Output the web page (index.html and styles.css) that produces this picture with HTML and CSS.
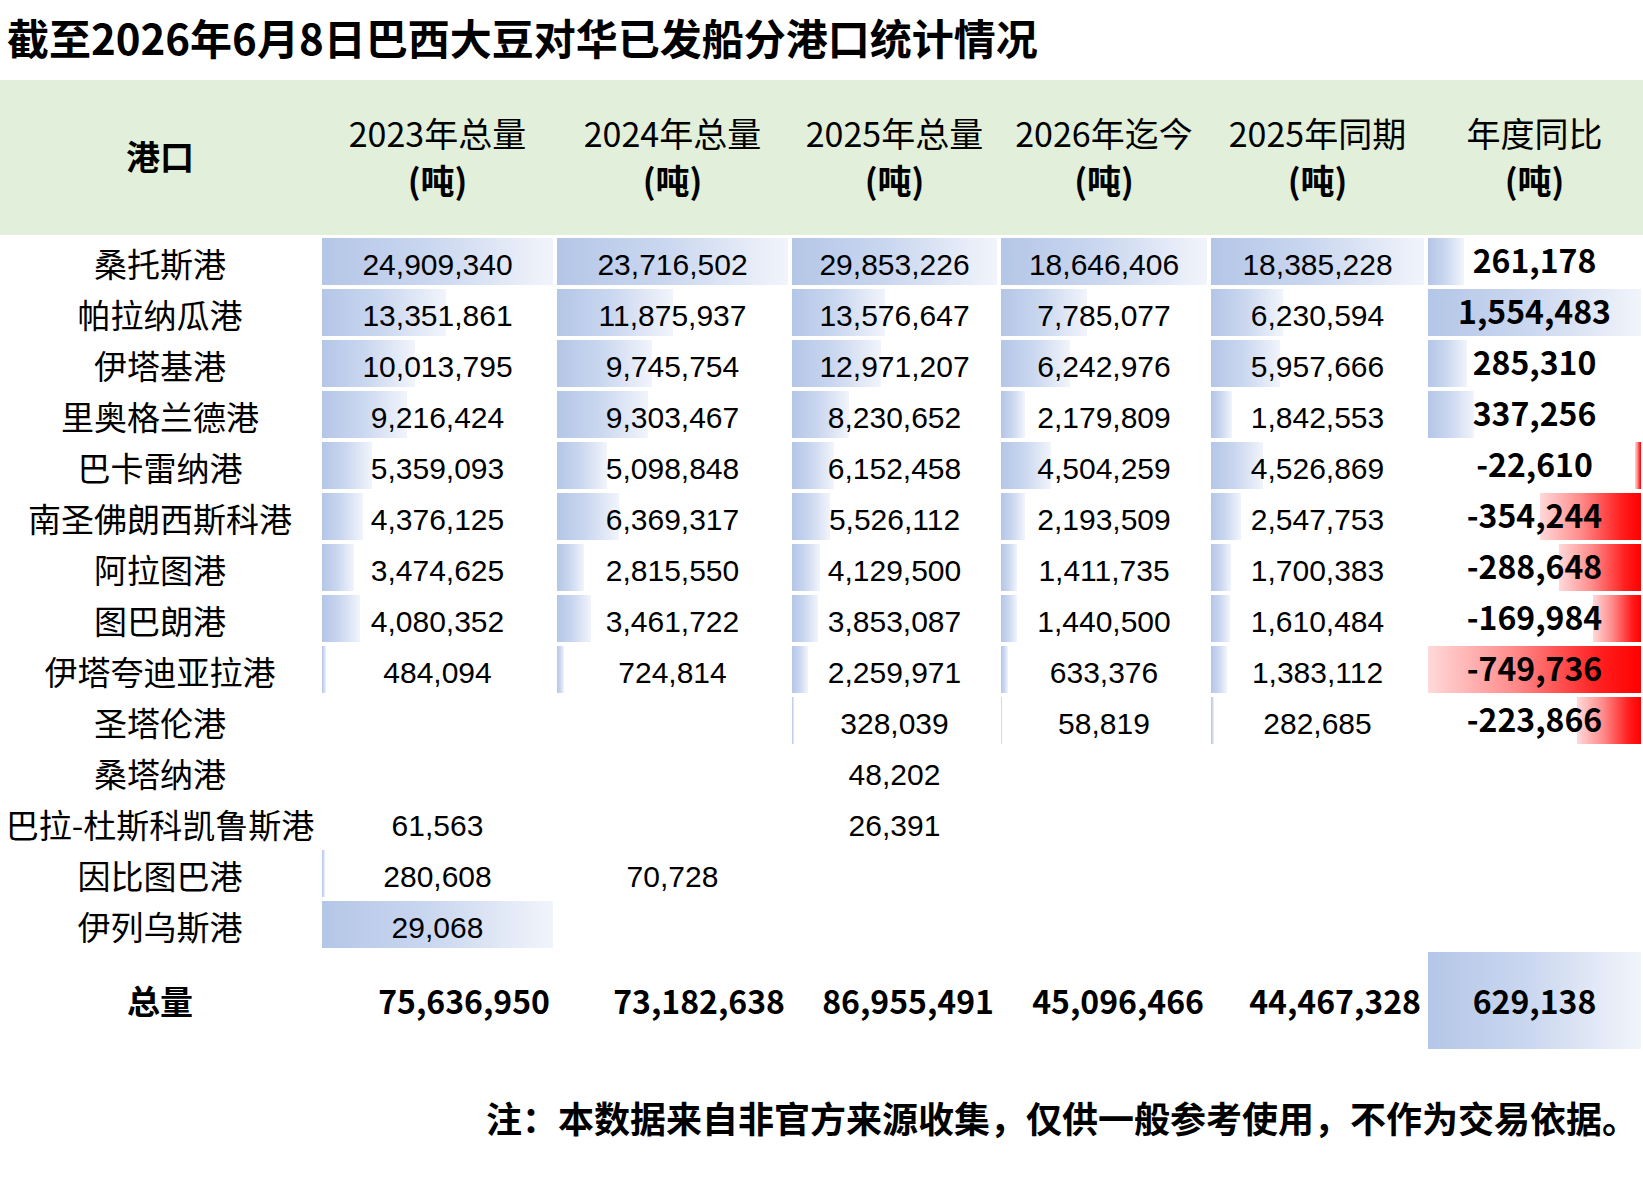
FILE: index.html
```html
<!DOCTYPE html>
<html lang="zh-CN">
<head>
<meta charset="utf-8">
<title>截至2026年6月8日巴西大豆对华已发船分港口统计情况</title>
<link rel="stylesheet" href="styles.css">
</head>
<body>
<div class="page">
  <h1 class="title">截至2026年6月8日巴西大豆对华已发船分港口统计情况</h1>

  <div class="head">
    <div class="hc"><span class="port-h">港口</span></div>
    <div class="hc"><span>2023年总量</span><b>(吨)</b></div>
    <div class="hc"><span>2024年总量</span><b>(吨)</b></div>
    <div class="hc"><span>2025年总量</span><b>(吨)</b></div>
    <div class="hc"><span>2026年迄今</span><b>(吨)</b></div>
    <div class="hc"><span>2025年同期</span><b>(吨)</b></div>
    <div class="hc"><span>年度同比</span><b>(吨)</b></div>
  </div>

  <div class="rows">
    <!-- 1 -->
    <div class="c port"><span>桑托斯港</span></div>
    <div class="c"><i class="bar" style="width:100%"></i><span class="v">24,909,340</span></div>
    <div class="c"><i class="bar" style="width:100%"></i><span class="v">23,716,502</span></div>
    <div class="c"><i class="bar" style="width:100%"></i><span class="v">29,853,226</span></div>
    <div class="c"><i class="bar" style="width:100%"></i><span class="v">18,646,406</span></div>
    <div class="c"><i class="bar" style="width:100%"></i><span class="v">18,385,228</span></div>
    <div class="c"><i class="bar" style="width:16.8%"></i><span class="vb">261,178</span></div>
    <!-- 2 -->
    <div class="c port"><span>帕拉纳瓜港</span></div>
    <div class="c"><i class="bar" style="width:53.6%"></i><span class="v">13,351,861</span></div>
    <div class="c"><i class="bar" style="width:50.07%"></i><span class="v">11,875,937</span></div>
    <div class="c"><i class="bar" style="width:45.48%"></i><span class="v">13,576,647</span></div>
    <div class="c"><i class="bar" style="width:41.75%"></i><span class="v">7,785,077</span></div>
    <div class="c"><i class="bar" style="width:33.89%"></i><span class="v">6,230,594</span></div>
    <div class="c"><i class="bar" style="width:100%"></i><span class="vb">1,554,483</span></div>
    <!-- 3 -->
    <div class="c port"><span>伊塔基港</span></div>
    <div class="c"><i class="bar" style="width:40.2%"></i><span class="v">10,013,795</span></div>
    <div class="c"><i class="bar" style="width:41.09%"></i><span class="v">9,745,754</span></div>
    <div class="c"><i class="bar" style="width:43.45%"></i><span class="v">12,971,207</span></div>
    <div class="c"><i class="bar" style="width:33.48%"></i><span class="v">6,242,976</span></div>
    <div class="c"><i class="bar" style="width:32.4%"></i><span class="v">5,957,666</span></div>
    <div class="c"><i class="bar" style="width:18.35%"></i><span class="vb">285,310</span></div>
    <!-- 4 -->
    <div class="c port"><span>里奥格兰德港</span></div>
    <div class="c"><i class="bar" style="width:37%"></i><span class="v">9,216,424</span></div>
    <div class="c"><i class="bar" style="width:39.23%"></i><span class="v">9,303,467</span></div>
    <div class="c"><i class="bar" style="width:27.57%"></i><span class="v">8,230,652</span></div>
    <div class="c"><i class="bar" style="width:11.69%"></i><span class="v">2,179,809</span></div>
    <div class="c"><i class="bar" style="width:10.02%"></i><span class="v">1,842,553</span></div>
    <div class="c"><i class="bar" style="width:21.7%"></i><span class="vb">337,256</span></div>
    <!-- 5 -->
    <div class="c port"><span>巴卡雷纳港</span></div>
    <div class="c"><i class="bar" style="width:21.51%"></i><span class="v">5,359,093</span></div>
    <div class="c"><i class="bar" style="width:21.5%"></i><span class="v">5,098,848</span></div>
    <div class="c"><i class="bar" style="width:20.61%"></i><span class="v">6,152,458</span></div>
    <div class="c"><i class="bar" style="width:24.16%"></i><span class="v">4,504,259</span></div>
    <div class="c"><i class="bar" style="width:24.62%"></i><span class="v">4,526,869</span></div>
    <div class="c"><i class="bar neg" style="width:3.02%"></i><span class="vb">-22,610</span></div>
    <!-- 6 -->
    <div class="c port"><span>南圣佛朗西斯科港</span></div>
    <div class="c"><i class="bar" style="width:17.57%"></i><span class="v">4,376,125</span></div>
    <div class="c"><i class="bar" style="width:26.86%"></i><span class="v">6,369,317</span></div>
    <div class="c"><i class="bar" style="width:18.51%"></i><span class="v">5,526,112</span></div>
    <div class="c"><i class="bar" style="width:11.76%"></i><span class="v">2,193,509</span></div>
    <div class="c"><i class="bar" style="width:13.86%"></i><span class="v">2,547,753</span></div>
    <div class="c"><i class="bar neg" style="width:47.25%"></i><span class="vb">-354,244</span></div>
    <!-- 7 -->
    <div class="c port"><span>阿拉图港</span></div>
    <div class="c"><i class="bar" style="width:13.95%"></i><span class="v">3,474,625</span></div>
    <div class="c"><i class="bar" style="width:11.87%"></i><span class="v">2,815,550</span></div>
    <div class="c"><i class="bar" style="width:13.83%"></i><span class="v">4,129,500</span></div>
    <div class="c"><i class="bar" style="width:7.57%"></i><span class="v">1,411,735</span></div>
    <div class="c"><i class="bar" style="width:9.25%"></i><span class="v">1,700,383</span></div>
    <div class="c"><i class="bar neg" style="width:38.5%"></i><span class="vb">-288,648</span></div>
    <!-- 8 -->
    <div class="c port"><span>图巴朗港</span></div>
    <div class="c"><i class="bar" style="width:16.38%"></i><span class="v">4,080,352</span></div>
    <div class="c"><i class="bar" style="width:14.6%"></i><span class="v">3,461,722</span></div>
    <div class="c"><i class="bar" style="width:12.91%"></i><span class="v">3,853,087</span></div>
    <div class="c"><i class="bar" style="width:7.73%"></i><span class="v">1,440,500</span></div>
    <div class="c"><i class="bar" style="width:8.76%"></i><span class="v">1,610,484</span></div>
    <div class="c"><i class="bar neg" style="width:22.67%"></i><span class="vb">-169,984</span></div>
    <!-- 9 -->
    <div class="c port"><span>伊塔夸迪亚拉港</span></div>
    <div class="c"><i class="bar" style="width:1.94%"></i><span class="v">484,094</span></div>
    <div class="c"><i class="bar" style="width:3.06%"></i><span class="v">724,814</span></div>
    <div class="c"><i class="bar" style="width:7.57%"></i><span class="v">2,259,971</span></div>
    <div class="c"><i class="bar" style="width:3.4%"></i><span class="v">633,376</span></div>
    <div class="c"><i class="bar" style="width:7.52%"></i><span class="v">1,383,112</span></div>
    <div class="c"><i class="bar neg" style="width:100%"></i><span class="vb">-749,736</span></div>
    <!-- 10 -->
    <div class="c port"><span>圣塔伦港</span></div>
    <div class="c"></div>
    <div class="c"></div>
    <div class="c"><i class="bar" style="width:1.1%"></i><span class="v">328,039</span></div>
    <div class="c"><i class="bar" style="width:1px"></i><span class="v">58,819</span></div>
    <div class="c"><i class="bar" style="width:1.54%"></i><span class="v">282,685</span></div>
    <div class="c"><i class="bar neg" style="width:29.86%"></i><span class="vb">-223,866</span></div>
    <!-- 11 -->
    <div class="c port"><span>桑塔纳港</span></div>
    <div class="c"></div>
    <div class="c"></div>
    <div class="c"><span class="v">48,202</span></div>
    <div class="c"></div>
    <div class="c"></div>
    <div class="c"></div>
    <!-- 12 -->
    <div class="c port"><span>巴拉-杜斯科凯鲁斯港</span></div>
    <div class="c"><span class="v">61,563</span></div>
    <div class="c"></div>
    <div class="c"><span class="v">26,391</span></div>
    <div class="c"></div>
    <div class="c"></div>
    <div class="c"></div>
    <!-- 13 -->
    <div class="c port"><span>因比图巴港</span></div>
    <div class="c"><i class="bar" style="width:1.13%"></i><span class="v">280,608</span></div>
    <div class="c"><span class="v">70,728</span></div>
    <div class="c"></div>
    <div class="c"></div>
    <div class="c"></div>
    <div class="c"></div>
    <!-- 14 -->
    <div class="c port"><span>伊列乌斯港</span></div>
    <div class="c"><i class="bar" style="width:100%"></i><span class="v">29,068</span></div>
    <div class="c"></div>
    <div class="c"></div>
    <div class="c"></div>
    <div class="c"></div>
    <div class="c"></div>
  </div>

  <div class="total">
    <div class="c port"><span class="tb">总量</span></div>
    <div class="c right"><span class="tb">75,636,950</span></div>
    <div class="c right"><span class="tb">73,182,638</span></div>
    <div class="c right"><span class="tb">86,955,491</span></div>
    <div class="c right"><span class="tb">45,096,466</span></div>
    <div class="c right"><span class="tb">44,467,328</span></div>
    <div class="c"><i class="bar" style="width:100%"></i><span class="tb">629,138</span></div>
  </div>

  <p class="note">注：本数据来自非官方来源收集，仅供一般参考使用，不作为交易依据。</p>
</div>
</body>
</html>
```

FILE: styles.css
```css
html, body {
  margin: 0;
  padding: 0;
  background: #ffffff;
}

body {
  font-family: "Noto Sans CJK SC", "Noto Sans", sans-serif;
  color: #000000;
  width: 1643px;
}

.page {
  width: 1643px;
}

.title {
  margin: 0;
  height: 80px;
  padding-left: 7px;
  font-size: 42px;
  font-weight: 700;
  line-height: 74px;
  white-space: nowrap;
  letter-spacing: 0;
}

.head,
.rows,
.total {
  display: grid;
  grid-template-columns: 320px 235px 235px 209px 210px 217px 217px;
}

.head {
  height: 155px;
  background: #e2efda;
}

.hc {
  display: flex;
  flex-direction: column;
  align-items: center;
  justify-content: center;
  padding-bottom: 4px;
  font-size: 34px;
  line-height: 47px;
  white-space: nowrap;
}

.hc span {
  font-weight: 400;
}

.hc b {
  font-weight: 700;
}

.hc .port-h {
  font-weight: 700;
}

.rows {
  margin-top: 1px;
  grid-auto-rows: 51px;
}

.total {
  grid-auto-rows: 101px;
}

.c {
  display: grid;
  padding: 2px;
  align-items: center;
  justify-items: center;
  min-width: 0;
}

.c > * {
  grid-area: 1 / 1;
}

.c.right {
  justify-items: end;
  padding-right: 5px;
}

.bar {
  display: block;
  height: 100%;
  justify-self: start;
  background: linear-gradient(90deg, #b4c6e7 0%, #c9d6ef 45%, #f1f4fb 100%);
}

.bar.neg {
  justify-self: end;
  background: linear-gradient(270deg, #ff0000 0%, #ff2020 20%, #ff8c8c 60%, #ffd9d9 100%);
}

.port span {
  font-size: 33px;
  line-height: 47px;
  padding-top: 2px;
  white-space: nowrap;
}

.v {
  font-family: "Liberation Sans", "Noto Sans CJK SC", sans-serif;
  font-size: 30px;
  line-height: 40px;
  padding-top: 7px;
  white-space: nowrap;
}

.vb {
  font-size: 32px;
  font-weight: 700;
  line-height: 43px;
  padding-bottom: 4px;
  white-space: nowrap;
}

.port span.tb,
.tb {
  font-size: 32px;
  font-weight: 700;
  line-height: 47px;
  padding-top: 0;
  white-space: nowrap;
}

.port span.tb {
  font-size: 33px;
}

.note {
  margin: 36px 0 0 0;
  padding-right: 5px;
  text-align: right;
  font-size: 36px;
  font-weight: 700;
  line-height: 60px;
  white-space: nowrap;
}
```
